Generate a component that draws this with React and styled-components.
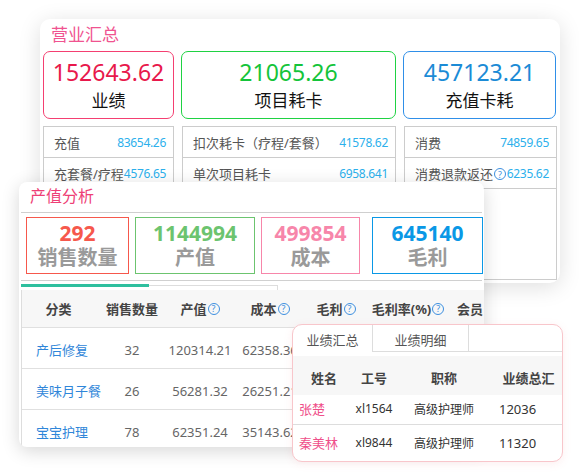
import React from "react";
import styled, {createGlobalStyle} from "styled-components";

const GlobalStyle = createGlobalStyle`
    html, body {
        margin: 0;
        padding: 0;
        background: #ffffff;
    }
    body {
        font-family: "Noto Sans", "Noto Sans CJK SC", sans-serif;
        color: #333;
    }
`;

const summaryKpis = [
    {value: "152643.62", label: "业绩", border: "#f43f71", color: "#e8184b"},
    {value: "21065.26", label: "项目耗卡", border: "#1fd243", color: "#14c43a"},
    {value: "457123.21", label: "充值卡耗", border: "#2f8fe8", color: "#1b8bd6"},
];

const summaryDetails = [
    [
        {label: "充值", value: "83654.26"},
        {label: "充套餐/疗程", value: "4576.65"},
    ],
    [
        {label: "扣次耗卡（疗程/套餐）", value: "41578.62"},
        {label: "单次项目耗卡", value: "6958.641"},
    ],
    [
        {label: "消费", value: "74859.65"},
        {label: "消费退款返还", value: "6235.62", help: true},
    ],
];

const outputKpis = [
    {value: "292", label: "销售数量", color: "#f6584c"},
    {value: "1144994", label: "产值", color: "#6cc46f"},
    {value: "499854", label: "成本", color: "#f786aa"},
    {value: "645140", label: "毛利", color: "#0a98e6"},
];

const outputColumns = [
    {title: "分类", width: 73},
    {title: "销售数量", width: 74},
    {title: "产值", width: 62, help: true},
    {title: "成本", width: 78, help: true},
    {title: "毛利", width: 54, help: true},
    {title: "毛利率(%)", width: 90, help: true},
    {title: "会员", width: 80, left: true},
];

const outputRows = [
    ["产后修复", "32", "120314.21", "62358.36", "57955.85", "48.17", "16"],
    ["美味月子餐", "26", "56281.32", "26251.21", "30030.11", "53.36", "12"],
    ["宝宝护理", "78", "62351.24", "35143.62", "27207.62", "43.64", "30"],
];

const staffRows = [
    {name: "张楚", code: "xl1564", title: "高级护理师", total: "12036"},
    {name: "秦美林", code: "xl9844", title: "高级护理师", total: "11320"},
];

const App = () => {
    return (
        <>
            <GlobalStyle />
            <Canvas>
                <SummaryCard>
                    <SummaryTitle>{"营业汇总"}</SummaryTitle>
                    <SummaryGrid>
                        {summaryKpis.map((k) => (
                            <SummaryKpi key={k.label} $border={k.border}>
                                <SummaryValue $color={k.color}>{k.value}</SummaryValue>
                                <SummaryLabel>{k.label}</SummaryLabel>
                            </SummaryKpi>
                        ))}
                    </SummaryGrid>
                    <DetailGrid>
                        {summaryDetails.map((col, i) => (
                            <DetailColumn key={i}>
                                {col.map((item) => (
                                    <DetailItem key={item.label}>
                                        <DetailLabel>
                                            {item.label}
                                            {item.help && <Help>{"?"}</Help>}
                                        </DetailLabel>
                                        <DetailValue>{item.value}</DetailValue>
                                    </DetailItem>
                                ))}
                            </DetailColumn>
                        ))}
                    </DetailGrid>
                </SummaryCard>

                <OutputCard>
                    <OutputTitle>{"产值分析"}</OutputTitle>
                    <OutputKpiRow>
                        {outputKpis.map((k) => (
                            <OutputKpi key={k.label} $color={k.color}>
                                <OutputValue $color={k.color}>{k.value}</OutputValue>
                                <OutputLabel>{k.label}</OutputLabel>
                            </OutputKpi>
                        ))}
                    </OutputKpiRow>
                    <TabStrip>
                        <ActiveStripTab />
                        <StripTab />
                    </TabStrip>
                    <Table>
                        <HeadRow>
                            {outputColumns.map((c) => (
                                <HeadCell key={c.title} $width={c.width} $left={c.left}>
                                    {c.title}
                                    {c.help && <Help>{"?"}</Help>}
                                </HeadCell>
                            ))}
                        </HeadRow>
                        {outputRows.map((row) => (
                            <BodyRow key={row[0]}>
                                {row.map((cell, i) => (
                                    <BodyCell
                                        key={i}
                                        $width={outputColumns[i].width}
                                        $first={i === 0}
                                        $left={outputColumns[i].left}
                                    >
                                        {cell}
                                    </BodyCell>
                                ))}
                            </BodyRow>
                        ))}
                    </Table>
                </OutputCard>

                <StaffCard>
                    <StaffTabs>
                        <StaffTab $active>{"业绩汇总"}</StaffTab>
                        <StaffTab>{"业绩明细"}</StaffTab>
                        <TabFiller />
                    </StaffTabs>
                    <StaffHead>
                        <StaffHeadCell>{"姓名"}</StaffHeadCell>
                        <StaffHeadCell>{"工号"}</StaffHeadCell>
                        <StaffHeadCell>{"职称"}</StaffHeadCell>
                        <StaffHeadCell>{"业绩总汇"}</StaffHeadCell>
                    </StaffHead>
                    {staffRows.map((r, i) => (
                        <StaffRow key={r.code} $last={i === staffRows.length - 1}>
                            <StaffName>{r.name}</StaffName>
                            <StaffCell>{r.code}</StaffCell>
                            <StaffCell>{r.title}</StaffCell>
                            <StaffTotal>{r.total}</StaffTotal>
                        </StaffRow>
                    ))}
                </StaffCard>
            </Canvas>
        </>
    );
};

export default App;

const Canvas = styled.div`
    position: relative;
    width: 579px;
    height: 473px;
    overflow: hidden;
    background: #ffffff;
`;

const Help = styled.span`
    display: inline-flex;
    align-items: center;
    justify-content: center;
    box-sizing: border-box;
    width: 12px;
    height: 12px;
    margin-left: 1px;
    border: 1px solid #3d8fe0;
    border-radius: 50%;
    color: #3d8fe0;
    font-size: 9px;
    font-weight: 400;
    line-height: 1;
    vertical-align: 1px;
`;

/* ---- 营业汇总 ---- */

const SummaryCard = styled.section`
    position: absolute;
    left: 40px;
    top: 19px;
    width: 520px;
    height: 264px;
    box-sizing: border-box;
    padding: 0 4px 3px 3px;
    display: flex;
    flex-direction: column;
    background: #fff;
    border-radius: 10px;
    box-shadow: 0 4px 22px rgba(0, 0, 0, 0.13);
    z-index: 1;
`;

const SummaryTitle = styled.h2`
    margin: 0;
    height: 32px;
    line-height: 32px;
    padding-left: 8px;
    font-size: 17px;
    font-weight: 400;
    color: #f05390;
`;

const SummaryGrid = styled.div`
    display: grid;
    grid-template-columns: 131px 215px 153px;
    column-gap: 7px;
    height: 68px;
`;

const SummaryKpi = styled.div`
    box-sizing: border-box;
    border: 1px solid ${(p) => p.$border};
    border-radius: 7px;
    display: flex;
    flex-direction: column;
    align-items: center;
`;

const SummaryValue = styled.div`
    margin-top: 5px;
    font-size: 23px;
    line-height: 31px;
    color: ${(p) => p.$color};
`;

const SummaryLabel = styled.div`
    font-size: 17px;
    line-height: 26px;
    color: #111;
`;

const DetailGrid = styled.div`
    margin-top: 7px;
    flex: 1;
    display: grid;
    grid-template-columns: 131px 214px 153px;
    column-gap: 8px;
`;

const DetailColumn = styled.div`
    border: 1px solid #cccccc;
`;

const DetailItem = styled.div`
    height: 30px;
    display: flex;
    align-items: center;
    justify-content: space-between;
    padding: 0 7px 0 10px;
    border-bottom: 1px solid #cccccc;
    white-space: nowrap;
`;

const DetailLabel = styled.span`
    font-size: 13px;
    color: #555;
`;

const DetailValue = styled.span`
    font-size: 12px;
    letter-spacing: -0.3px;
    color: #2cb0ec;
`;

/* ---- 产值分析 ---- */

const OutputCard = styled.section`
    position: absolute;
    left: 19px;
    top: 182px;
    width: 465px;
    height: 265px;
    box-sizing: border-box;
    padding: 0 2px;
    background: #fff;
    border-radius: 8px;
    box-shadow: 0 4px 18px rgba(0, 0, 0, 0.16);
    overflow: hidden;
    z-index: 2;
`;

const OutputTitle = styled.h2`
    margin: 0;
    height: 30px;
    line-height: 29px;
    padding-left: 9px;
    font-size: 16px;
    font-weight: 400;
    color: #ee3f76;
    border-bottom: 1px solid #cfcfcf;
`;

const OutputKpiRow = styled.div`
    display: grid;
    grid-template-columns: 103px 120px 99px 3px 108px;
    column-gap: 6px;
    padding: 4px 0 6px 5px;
    border-bottom: 1px solid #d0d0d0;
    & > :nth-child(4) {
        grid-column: 5;
        margin-left: -3px;
    }
`;

const OutputKpi = styled.div`
    box-sizing: border-box;
    height: 57px;
    border: 1px solid ${(p) => p.$color};
    display: flex;
    flex-direction: column;
    align-items: center;
    justify-content: center;
`;

const OutputValue = styled.div`
    font-size: 21px;
    font-weight: 700;
    line-height: 24px;
    color: ${(p) => p.$color};
`;

const OutputLabel = styled.div`
    font-size: 20px;
    font-weight: 700;
    line-height: 26px;
    color: #9a9a9a;
`;

const TabStrip = styled.div`
    display: flex;
    align-items: flex-end;
    height: 9px;
`;

const ActiveStripTab = styled.div`
    width: 128px;
    height: 6px;
    box-sizing: border-box;
    border-top: 3px solid #2ebf9e;
`;

const StripTab = styled.div`
    width: 129px;
    height: 5px;
    box-sizing: border-box;
    border-top: 1px solid #dddddd;
    border-right: 1px solid #dddddd;
`;

const Table = styled.div`
    border-left: 1px solid #dddddd;
    width: max-content;
`;

const HeadRow = styled.div`
    display: flex;
    height: 37px;
    background: #f7f7f7;
    border-bottom: 1px solid #e0e0e0;
`;

const HeadCell = styled.div`
    width: ${(p) => p.$width}px;
    display: flex;
    align-items: center;
    justify-content: ${(p) => (p.$left ? "flex-start" : "center")};
    padding-left: ${(p) => (p.$left ? "4px" : "0")};
    box-sizing: border-box;
    font-size: 13px;
    font-weight: 700;
    color: #444;
    white-space: nowrap;
`;

const BodyRow = styled.div`
    display: flex;
    height: 40px;
    border-bottom: 1px solid #e0e0e0;
`;

const BodyCell = styled.div`
    width: ${(p) => p.$width}px;
    box-sizing: border-box;
    display: flex;
    align-items: center;
    justify-content: ${(p) => (p.$first || p.$left ? "flex-start" : "center")};
    padding-left: ${(p) => (p.$first ? "14px" : p.$left ? "4px" : "0")};
    padding-top: 3px;
    font-size: 13px;
    color: ${(p) => (p.$first ? "#2f86d9" : "#666")};
    white-space: nowrap;
`;

/* ---- 业绩汇总 ---- */

const StaffCard = styled.section`
    position: absolute;
    left: 292px;
    top: 324px;
    width: 271px;
    height: 138px;
    box-sizing: border-box;
    background: #fff;
    border: 1px solid #f8c6cb;
    border-radius: 10px;
    box-shadow: 0 2px 8px rgba(240, 120, 130, 0.12);
    overflow: hidden;
    z-index: 3;
`;

const StaffTabs = styled.div`
    display: flex;
    height: 27px;
`;

const StaffTab = styled.div`
    width: ${(p) => (p.$active ? "80px" : "96px")};
    box-sizing: border-box;
    display: flex;
    align-items: center;
    justify-content: center;
    padding-top: 2px;
    font-size: 13px;
    color: #555;
    border-right: 1px solid #dddddd;
    border-bottom: ${(p) => (p.$active ? "none" : "1px solid #dddddd")};
`;

const TabFiller = styled.div`
    flex: 1;
    border-bottom: 1px solid #dddddd;
`;

const staffColumns = "62px 38px 102px 1fr";

const StaffHead = styled.div`
    margin-top: 4px;
    height: 39px;
    display: grid;
    grid-template-columns: ${staffColumns};
    align-items: center;
    background: #f7f7f7;
`;

const StaffHeadCell = styled.div`
    text-align: center;
    padding-top: 3px;
    font-size: 13px;
    font-weight: 700;
    color: #444;
    white-space: nowrap;
`;

const StaffRow = styled.div`
    display: grid;
    grid-template-columns: ${staffColumns};
    align-items: center;
    height: ${(p) => (p.$last ? "35px" : "30px")};
    padding-bottom: ${(p) => (p.$last ? "0" : "2px")};
    box-sizing: border-box;
    border-bottom: ${(p) => (p.$last ? "none" : "1px solid #dddddd")};
    font-size: 12px;
    color: #333;
`;

const StaffName = styled.div`
    padding-left: 6px;
    font-size: 13px;
    color: #ef4f8a;
    white-space: nowrap;
`;

const StaffCell = styled.div`
    text-align: center;
    white-space: nowrap;
`;

const StaffTotal = styled.div`
    padding-left: 4px;
    font-size: 13px;
    white-space: nowrap;
`;
